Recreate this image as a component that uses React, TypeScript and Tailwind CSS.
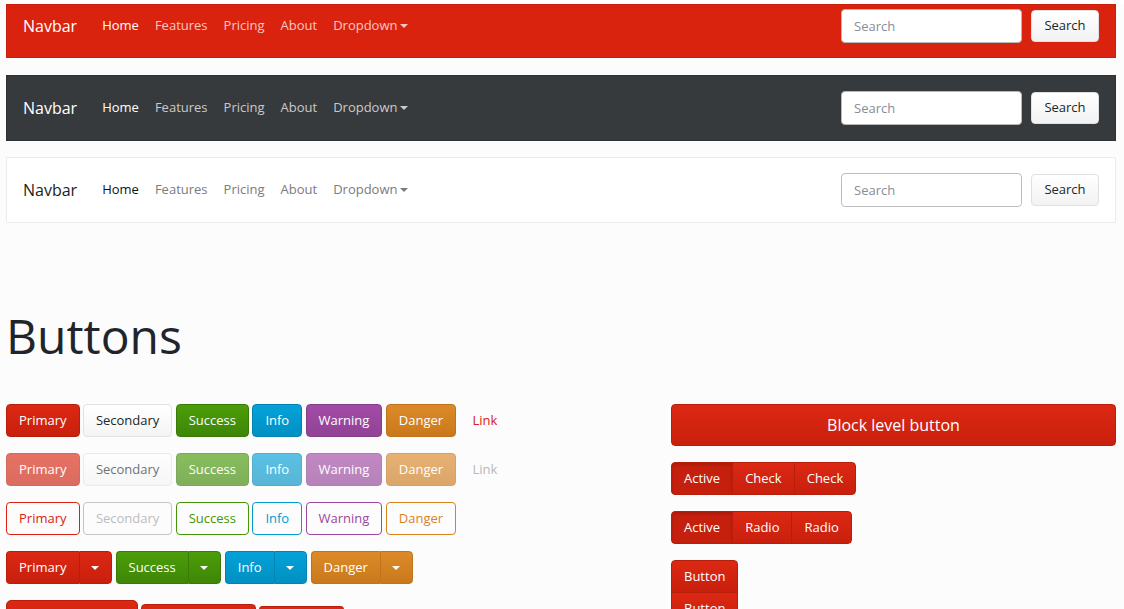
import React from 'react';

const solid: Record<string, string> = {
  primary: 'bg-linear-to-b from-[#dc2813] to-[#c8200d] border-[#b81e0c] text-white',
  secondary: 'bg-linear-to-b from-[#ffffff] to-[#f4f4f4] border-[#e2e2e2] text-[#212529]',
  success: 'bg-linear-to-b from-[#4b9d09] to-[#3f8607] border-[#3a7a07] text-white',
  info: 'bg-linear-to-b from-[#03a2d9] to-[#0290c2] border-[#0283b0] text-white',
  warning: 'bg-linear-to-b from-[#a34ba7] to-[#914395] border-[#863e89] text-white',
  danger: 'bg-linear-to-b from-[#dc8a29] to-[#c9791c] border-[#bf731b] text-white',
};

const outline: Record<string, string> = {
  primary: 'border-[#d9230f] text-[#d9230f]',
  secondary: 'border-[#c4c4c4] text-[#bdbdbd]',
  success: 'border-[#469408] text-[#469408]',
  info: 'border-[#029acf] text-[#029acf]',
  warning: 'border-[#9b479f] text-[#9b479f]',
  danger: 'border-[#d9831f] text-[#d9831f]',
};

const labels: [string, string][] = [
  ['primary', 'Primary'],
  ['secondary', 'Secondary'],
  ['success', 'Success'],
  ['info', 'Info'],
  ['warning', 'Warning'],
  ['danger', 'Danger'],
];

const base = 'border rounded-[4px] px-3 py-[6px] text-[13px] leading-[19px]';

function Caret({ className = 'border-t-white' }: { className?: string }) {
  return (
    <span
      className={`inline-block w-0 h-0 border-l-[4px] border-r-[4px] border-t-[4px] border-l-transparent border-r-transparent ${className}`}
    />
  );
}

type NavTheme = 'primary' | 'dark' | 'light';

function Navbar({ theme, first }: { theme: NavTheme; first?: boolean }) {
  const shell =
    theme === 'primary'
      ? 'bg-[#d9230f] border-[#c8200d]'
      : theme === 'dark'
      ? 'bg-[#373a3c] border-[#2e3133]'
      : 'bg-white border-[#ececec]';
  const brand = theme === 'light' ? 'text-[#1d1d1d]' : 'text-white';
  const active = theme === 'light' ? 'text-[#111]' : 'text-white';
  const link =
    theme === 'primary'
      ? 'text-[#f6c8c3]'
      : theme === 'dark'
      ? 'text-[#c9cacb]'
      : 'text-[#7b7b7b]';
  const caret =
    theme === 'primary' ? 'border-t-[#f6c8c3]' : theme === 'dark' ? 'border-t-[#c9cacb]' : 'border-t-[#7b7b7b]';
  const input = theme === 'light' ? 'border-[#bdbdbd]' : 'border-[#b8b8b8]';

  return (
    <nav
      className={`flex items-center border px-4 ${shell} ${
        first ? 'h-[54px] pb-[11px] mt-[4px]' : 'h-[66px]'
      }`}
    >
      <span className={`text-[16px] mr-[17px] ${brand}`}>Navbar</span>
      <ul className="flex items-center text-[13px]">
        <li className={`px-2 ${active}`}>Home</li>
        <li className={`px-2 ${link}`}>Features</li>
        <li className={`px-2 ${link}`}>Pricing</li>
        <li className={`px-2 ${link}`}>About</li>
        <li className={`px-2 flex items-center gap-[3px] ${link}`}>
          Dropdown <Caret className={caret} />
        </li>
      </ul>
      <div className="ml-auto flex items-center gap-[9px]">
        <input
          placeholder="Search"
          className={`w-[181px] h-[34px] bg-white border rounded-[4px] px-3 text-[13px] placeholder:text-[#868e96] outline-none ${input}`}
        />
        <button className="w-[68px] h-[32px] bg-linear-to-b from-[#ffffff] to-[#f2f2f2] border border-[#e0e0e0] rounded-[4px] text-[13px] text-[#212529]">
          Search
        </button>
      </div>
    </nav>
  );
}

function Split({ kind, label }: { kind: string; label: string }) {
  return (
    <div className="flex">
      <button className={`${base} ${solid[kind]} rounded-r-none border-r-0`}>{label}</button>
      <button className={`border rounded-[4px] rounded-l-none w-[33px] flex items-center justify-center ${solid[kind]}`}>
        <Caret />
      </button>
    </div>
  );
}

function Group({ items }: { items: string[] }) {
  return (
    <div className="flex">
      {items.map((t, i) => (
        <button
          key={i}
          className={`border border-[#b81e0c] px-3 py-[6px] text-[13px] leading-[19px] text-white ${
            i === 0
              ? 'bg-[#c51f0d] shadow-[inset_0_2px_3px_rgba(0,0,0,0.15)] rounded-l-[4px]'
              : 'bg-linear-to-b from-[#dc2813] to-[#c8200d]'
          } ${i > 0 ? '-ml-px' : ''} ${i === items.length - 1 ? 'rounded-r-[4px]' : ''}`}
        >
          {t}
        </button>
      ))}
    </div>
  );
}

export default function App() {
  return (
    <div className="min-h-screen bg-[#fcfcfc] px-[6px] text-[#212529]" style={{ fontFamily: '"Open Sans", "Liberation Sans", sans-serif' }}>
      <div className="w-[1110px]">
        <Navbar theme="primary" first />
        <div className="mt-[17px]">
          <Navbar theme="dark" />
        </div>
        <div className="mt-4">
          <Navbar theme="light" />
        </div>

        <h1 className="mt-[85px] mb-[40px] text-[48px] leading-[56px] text-[#212529]">Buttons</h1>

        <div className="flex gap-[30px]">
          <div className="w-[635px] flex flex-col gap-4">
            <div className="flex items-center gap-[3.4px]">
              {labels.map(([k, t]) => (
                <button key={k} className={`${base} ${solid[k]}`}>{t}</button>
              ))}
              <button className={`${base} border-transparent text-[#d9230f]`}>Link</button>
            </div>
            <div className="flex items-center gap-[3.4px]">
              {labels.map(([k, t]) => (
                <button key={k} className={`${base} ${solid[k]} opacity-65 ${k === 'secondary' ? 'text-[#8a8a8a]' : ''}`}>
                  {t}
                </button>
              ))}
              <button className={`${base} border-transparent text-[#b8b8b8]`}>Link</button>
            </div>
            <div className="flex items-center gap-[3.4px]">
              {labels.map(([k, t]) => (
                <button key={k} className={`${base} bg-transparent ${outline[k]}`}>{t}</button>
              ))}
            </div>
            <div className="flex items-center gap-1">
              <Split kind="primary" label="Primary" />
              <Split kind="success" label="Success" />
              <Split kind="info" label="Info" />
              <Split kind="danger" label="Danger" />
            </div>
            <div className="flex items-center gap-[3px]">
              <button className={`border rounded-[5px] px-[17px] py-2 text-[16px] leading-[23px] ${solid.primary}`}>Large button</button>
              <button className={`${base} ${solid.primary}`}>Default button</button>
              <button className={`border rounded-[3px] px-2 py-[5px] text-[11.4px] leading-[17px] ${solid.primary}`}>Small button</button>
            </div>
          </div>

          <div className="w-[445px] flex flex-col items-start gap-4">
            <button className={`w-full border rounded-[4px] py-2 text-[16px] leading-[24px] ${solid.primary}`}>
              Block level button
            </button>
            <Group items={['Active', 'Check', 'Check']} />
            <Group items={['Active', 'Radio', 'Radio']} />
            <div className="flex flex-col">
              {['Button', 'Button', 'Button', 'Button'].map((t, i) => (
                <button
                  key={i}
                  className={`border border-[#b81e0c] px-3 py-[6px] text-[13px] leading-[19px] text-white bg-linear-to-b from-[#dc2813] to-[#c8200d] ${
                    i === 0 ? 'rounded-t-[4px]' : '-mt-px'
                  } ${i === 3 ? 'rounded-b-[4px]' : ''}`}
                >
                  {t}
                </button>
              ))}
            </div>
          </div>
        </div>
      </div>
    </div>
  );
}
